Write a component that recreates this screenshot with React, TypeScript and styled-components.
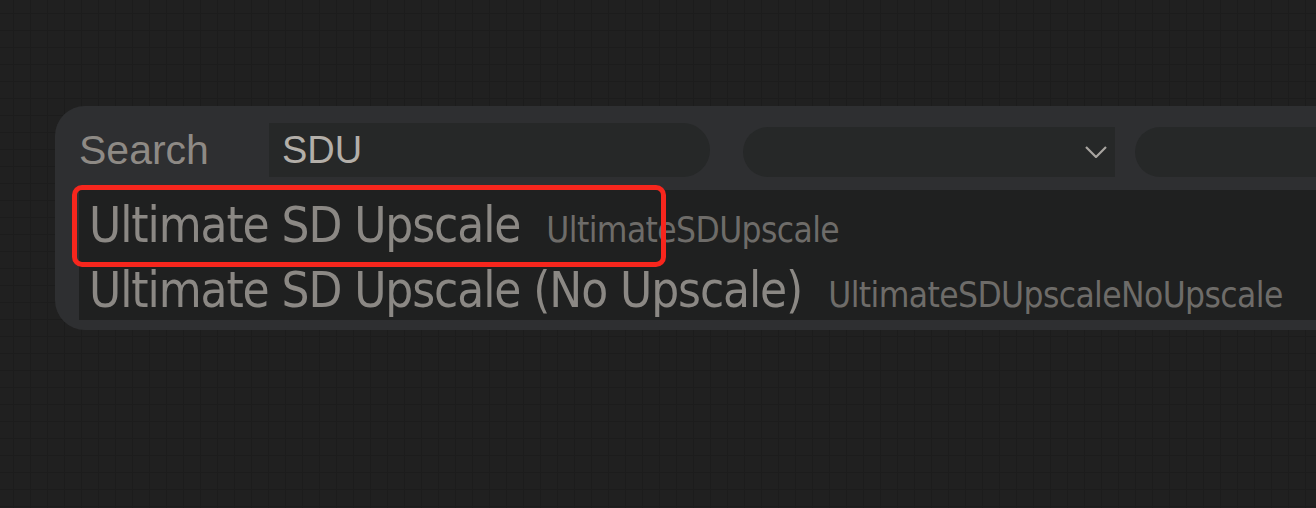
import React from "react";
import styled, { createGlobalStyle } from "styled-components";

const Global = createGlobalStyle`
  html, body {
    margin: 0;
    padding: 0;
    width: 1316px;
    height: 508px;
    overflow: hidden;
    background-color: #202020;
    background-image:
      linear-gradient(to right, #1c1c1c 1px, transparent 1px),
      linear-gradient(to bottom, #1c1c1c 1px, transparent 1px);
    background-size: 17px 17px;
    background-position: 13px 13px;
  }
`;

const Canvas = styled.div`
  padding: 106px 0 0 55px;
  width: 1316px;
  height: 508px;
  box-sizing: border-box;
  overflow: hidden;
`;

const Panel = styled.div`
  position: relative;
  width: 1400px;
  box-sizing: border-box;
  background: #2e2f31;
  border-radius: 30px;
  padding: 17px 0 10px 24px;
  display: flex;
  flex-direction: column;
  gap: 13px;
`;

const Header = styled.div`
  display: flex;
  align-items: flex-end;
  height: 54px;
`;

const Label = styled.div`
  width: 190px;
  align-self: stretch;
  font-family: "Liberation Sans", Arial, sans-serif;
  font-size: 41px;
  line-height: 54px;
  color: #8e8a85;
`;

const Input = styled.div`
  width: 441px;
  height: 54px;
  box-sizing: border-box;
  background: #262828;
  border-radius: 0 27px 27px 0;
  padding-left: 13px;
  font-family: "Liberation Sans", Arial, sans-serif;
  font-size: 38px;
  line-height: 54px;
  color: #b3afa9;
`;

const Select = styled.div<{ $w: number; $ml: number }>`
  width: ${(p) => p.$w}px;
  margin-left: ${(p) => p.$ml}px;
  height: 50px;
  box-sizing: border-box;
  background: #262828;
  border-radius: 25px 0 0 25px;
  display: flex;
  align-items: center;
  justify-content: flex-end;
  padding-right: 8px;
`;

const Results = styled.div`
  background: #1f2020;
  display: flex;
  flex-direction: column;
`;

const Item = styled.div`
  height: 65px;
  box-sizing: border-box;
  padding: 7px 0 0 10px;
  display: flex;
  align-items: baseline;
  gap: 26px;
  white-space: nowrap;
`;

const Name = styled.span`
  font-family: "DejaVu Sans Condensed", "DejaVu Sans", sans-serif;
  font-stretch: condensed;
  font-size: 49px;
  line-height: 58px;
  letter-spacing: -1.1px;
  color: #8b8884;
`;

const Type = styled.span`
  font-family: "DejaVu Sans Condensed", "DejaVu Sans", sans-serif;
  font-stretch: condensed;
  font-size: 35px;
  letter-spacing: -0.6px;
  color: #6e6c69;
`;

const Highlight = styled.div`
  position: absolute;
  left: 17px;
  top: 79px;
  width: 594px;
  height: 82px;
  box-sizing: border-box;
  border: 5px solid #f7261d;
  border-radius: 10px;
  pointer-events: none;
`;

const Chevron = () => (
  <svg width="22" height="12" viewBox="0 0 22 12" fill="none">
    <path d="M1 1 L11 11 L21 1" stroke="#a8a5a0" strokeWidth="2.2" />
  </svg>
);

const items = [
  { name: "Ultimate SD Upscale", type: "UltimateSDUpscale" },
  { name: "Ultimate SD Upscale (No Upscale)", type: "UltimateSDUpscaleNoUpscale" },
];

export default function App() {
  return (
    <>
      <Global />
      <Canvas>
        <Panel>
          <Header>
            <Label>Search</Label>
            <Input>SDU</Input>
            <Select $w={372} $ml={33}>
              <Chevron />
            </Select>
            <Select $w={300} $ml={20} />
          </Header>
          <Results>
            {items.map((it) => (
              <Item key={it.type}>
                <Name>{it.name}</Name>
                <Type>{it.type}</Type>
              </Item>
            ))}
          </Results>
          <Highlight />
        </Panel>
      </Canvas>
    </>
  );
}
